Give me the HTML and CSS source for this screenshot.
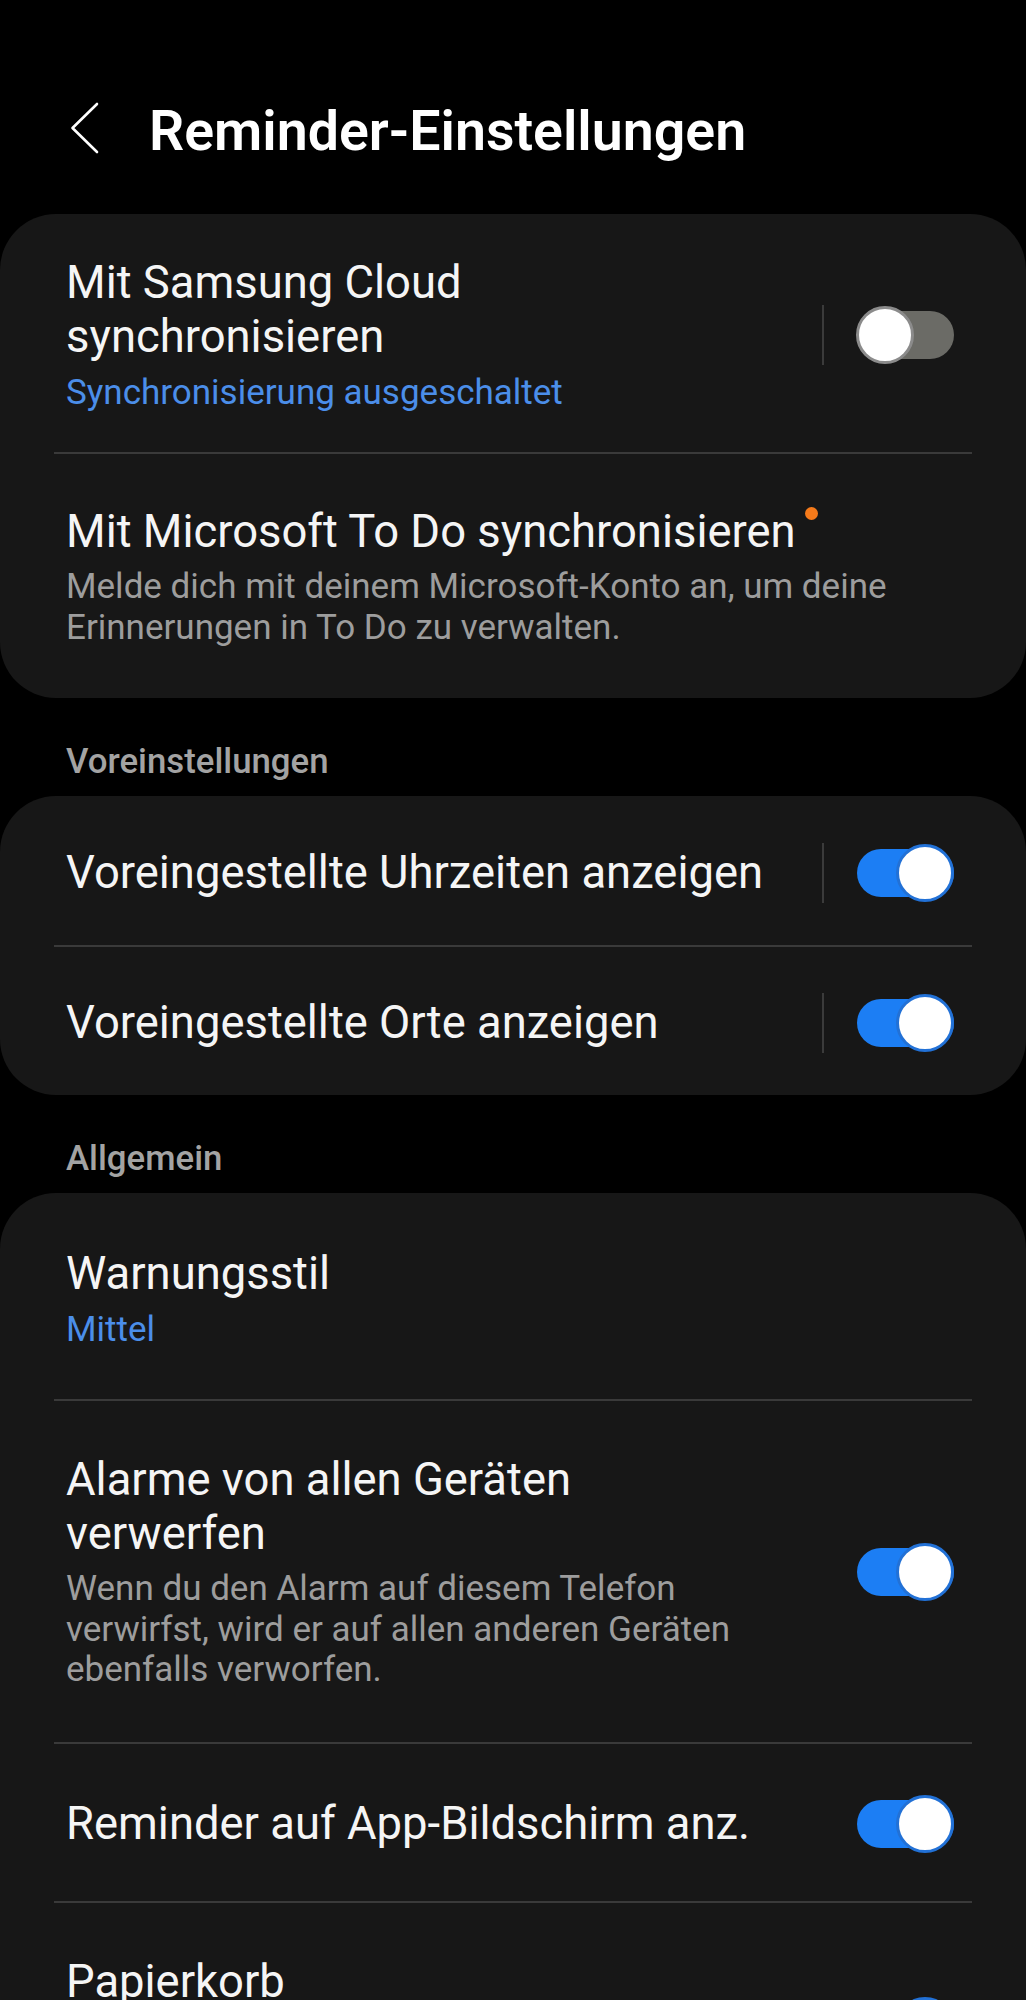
FILE: index.html
```html
<!DOCTYPE html>
<html lang="de">
<head>
<meta charset="utf-8">
<title>Reminder-Einstellungen</title>
<link rel="stylesheet" href="styles.css">
</head>
<body>
<div class="screen">
  <header class="appbar">
    <svg class="back" width="30" height="52" viewBox="0 0 30 52" aria-hidden="true">
      <path d="M27 2 L2.5 26 L27 50" fill="none" stroke="#fff" stroke-width="2.6" stroke-linecap="round" stroke-linejoin="round"/>
    </svg>
    <h1 class="title">Reminder-Einstellungen</h1>
  </header>

  <section class="card">
    <div class="row r-first">
      <div class="text">
        <div class="label">Mit Samsung Cloud synchronisieren</div>
        <div class="sub blue">Synchronisierung ausgeschaltet</div>
      </div>
      <span class="vdiv"></span>
      <span class="switch off"><span class="knob"></span></span>
    </div>
    <div class="sep"></div>
    <div class="row r-ms">
      <div class="text wide">
        <div class="label">Mit Microsoft To Do synchronisieren<span class="dot"></span></div>
        <div class="desc">Melde dich mit deinem Microsoft-Konto an, um deine Erinnerungen in To Do zu verwalten.</div>
      </div>
    </div>
  </section>

  <h2 class="section">Voreinstellungen</h2>

  <section class="card">
    <div class="row r-a">
      <div class="text">
        <div class="label">Voreingestellte Uhrzeiten anzeigen</div>
      </div>
      <span class="vdiv"></span>
      <span class="switch on"><span class="knob"></span></span>
    </div>
    <div class="sep"></div>
    <div class="row r-b">
      <div class="text">
        <div class="label">Voreingestellte Orte anzeigen</div>
      </div>
      <span class="vdiv"></span>
      <span class="switch on"><span class="knob"></span></span>
    </div>
  </section>

  <h2 class="section">Allgemein</h2>

  <section class="card">
    <div class="row r-warn">
      <div class="text wide">
        <div class="label">Warnungsstil</div>
        <div class="sub blue">Mittel</div>
      </div>
    </div>
    <div class="sep"></div>
    <div class="row r-mid">
      <div class="text">
        <div class="label">Alarme von allen Geräten verwerfen</div>
        <div class="desc">Wenn du den Alarm auf diesem Telefon verwirfst, wird er auf allen anderen Geräten ebenfalls verworfen.</div>
      </div>
      <span class="vdiv hidden"></span>
      <span class="switch on"><span class="knob"></span></span>
    </div>
    <div class="sep"></div>
    <div class="row r-single">
      <div class="text">
        <div class="label">Reminder auf App-Bildschirm anz.</div>
      </div>
      <span class="vdiv hidden"></span>
      <span class="switch on"><span class="knob"></span></span>
    </div>
    <div class="sep"></div>
    <div class="row r-mid">
      <div class="text">
        <div class="label">Papierkorb</div>
        <div class="desc">Gelöschte Reminder 30 Tage lang im Papierkorb aufbewahren.</div>
      </div>
      <span class="vdiv hidden"></span>
      <span class="switch on"><span class="knob"></span></span>
    </div>
  </section>
</div>
</body>
</html>
```

FILE: styles.css
```css
* { box-sizing: border-box; }

html, body {
  margin: 0;
  padding: 0;
  background: #000;
}

body {
  font-family: Roboto, "Noto Sans", "Liberation Sans", sans-serif;
  color: #f4f4f4;
}

.screen {
  width: 1026px;
  padding-bottom: 200px;
}

.appbar {
  display: flex;
  align-items: center;
  height: 100px;
  margin-top: 82px;
  padding-left: 70px;
}

.back {
  flex: none;
  margin-bottom: 8px;
}

.title {
  margin: 0 0 0 49px;
  font-size: 55.5px;
  line-height: 64px;
  font-weight: 600;
  color: #fff;
  letter-spacing: 0;
}

.card {
  background: #171717;
  border-radius: 56px;
  margin-top: 32px;
}

.section {
  margin: 42px 0 14px 0;
  padding-left: 66px;
  font-size: 34.8px;
  line-height: 42px;
  font-weight: 500;
  color: #a3a3a3;
}

.section + .card {
  margin-top: 0;
}

.row {
  display: flex;
  align-items: center;
  padding: 50px 72px 50px 66px;
}

.r-first { padding-top: 42px; padding-bottom: 38px; }
.r-ms { padding-top: 51px; padding-bottom: 50px; }
.r-a { padding-top: 47px; padding-bottom: 42px; }
.r-b { padding-top: 46px; padding-bottom: 42px; }
.r-warn { padding-top: 54px; padding-bottom: 48px; }
.r-mid { padding-top: 52px; padding-bottom: 51px; }
.r-single { padding-top: 50px; padding-bottom: 47px; }

.text {
  flex: 1;
  min-width: 0;
  padding-right: 51px;
}

.text.wide {
  padding-right: 0;
}

.label {
  font-size: 45.4px;
  line-height: 54px;
  font-weight: 400;
  color: #f5f5f5;
}

.sub {
  margin-top: 8px;
  font-size: 35px;
  line-height: 42px;
}

.blue {
  color: #4b8ee9;
}

.desc {
  margin-top: 8px;
  font-size: 35px;
  line-height: 40.5px;
  color: #9d9d9d;
}

.dot {
  display: inline-block;
  vertical-align: top;
  width: 13px;
  height: 13px;
  margin: 2px 0 0 9px;
  border-radius: 50%;
  background: #f57a1a;
}

.sep {
  height: 2px;
  margin: 0 54px;
  background: #3a3a3a;
}

.vdiv {
  flex: none;
  width: 2px;
  height: 60px;
  background: #3b3b3b;
}

.vdiv.hidden {
  visibility: hidden;
}

.switch {
  position: relative;
  flex: none;
  width: 98px;
  height: 58px;
  margin-left: 32px;
}

.switch::before {
  content: "";
  position: absolute;
  left: 1px;
  right: 0;
  top: 5px;
  height: 48px;
  border-radius: 24px;
}

.switch.off::before { background: #6b6b66; }
.switch.on::before { background: #1c7ef4; }

.knob {
  position: absolute;
  top: 0;
  width: 58px;
  height: 58px;
  border-radius: 50%;
  background: #fff;
  border: 3px solid #8a8a8a;
}

.switch.off .knob { left: 0; border-color: #8b8b8b; }
.switch.on .knob { right: 0; border-color: #2271d6; }
```
